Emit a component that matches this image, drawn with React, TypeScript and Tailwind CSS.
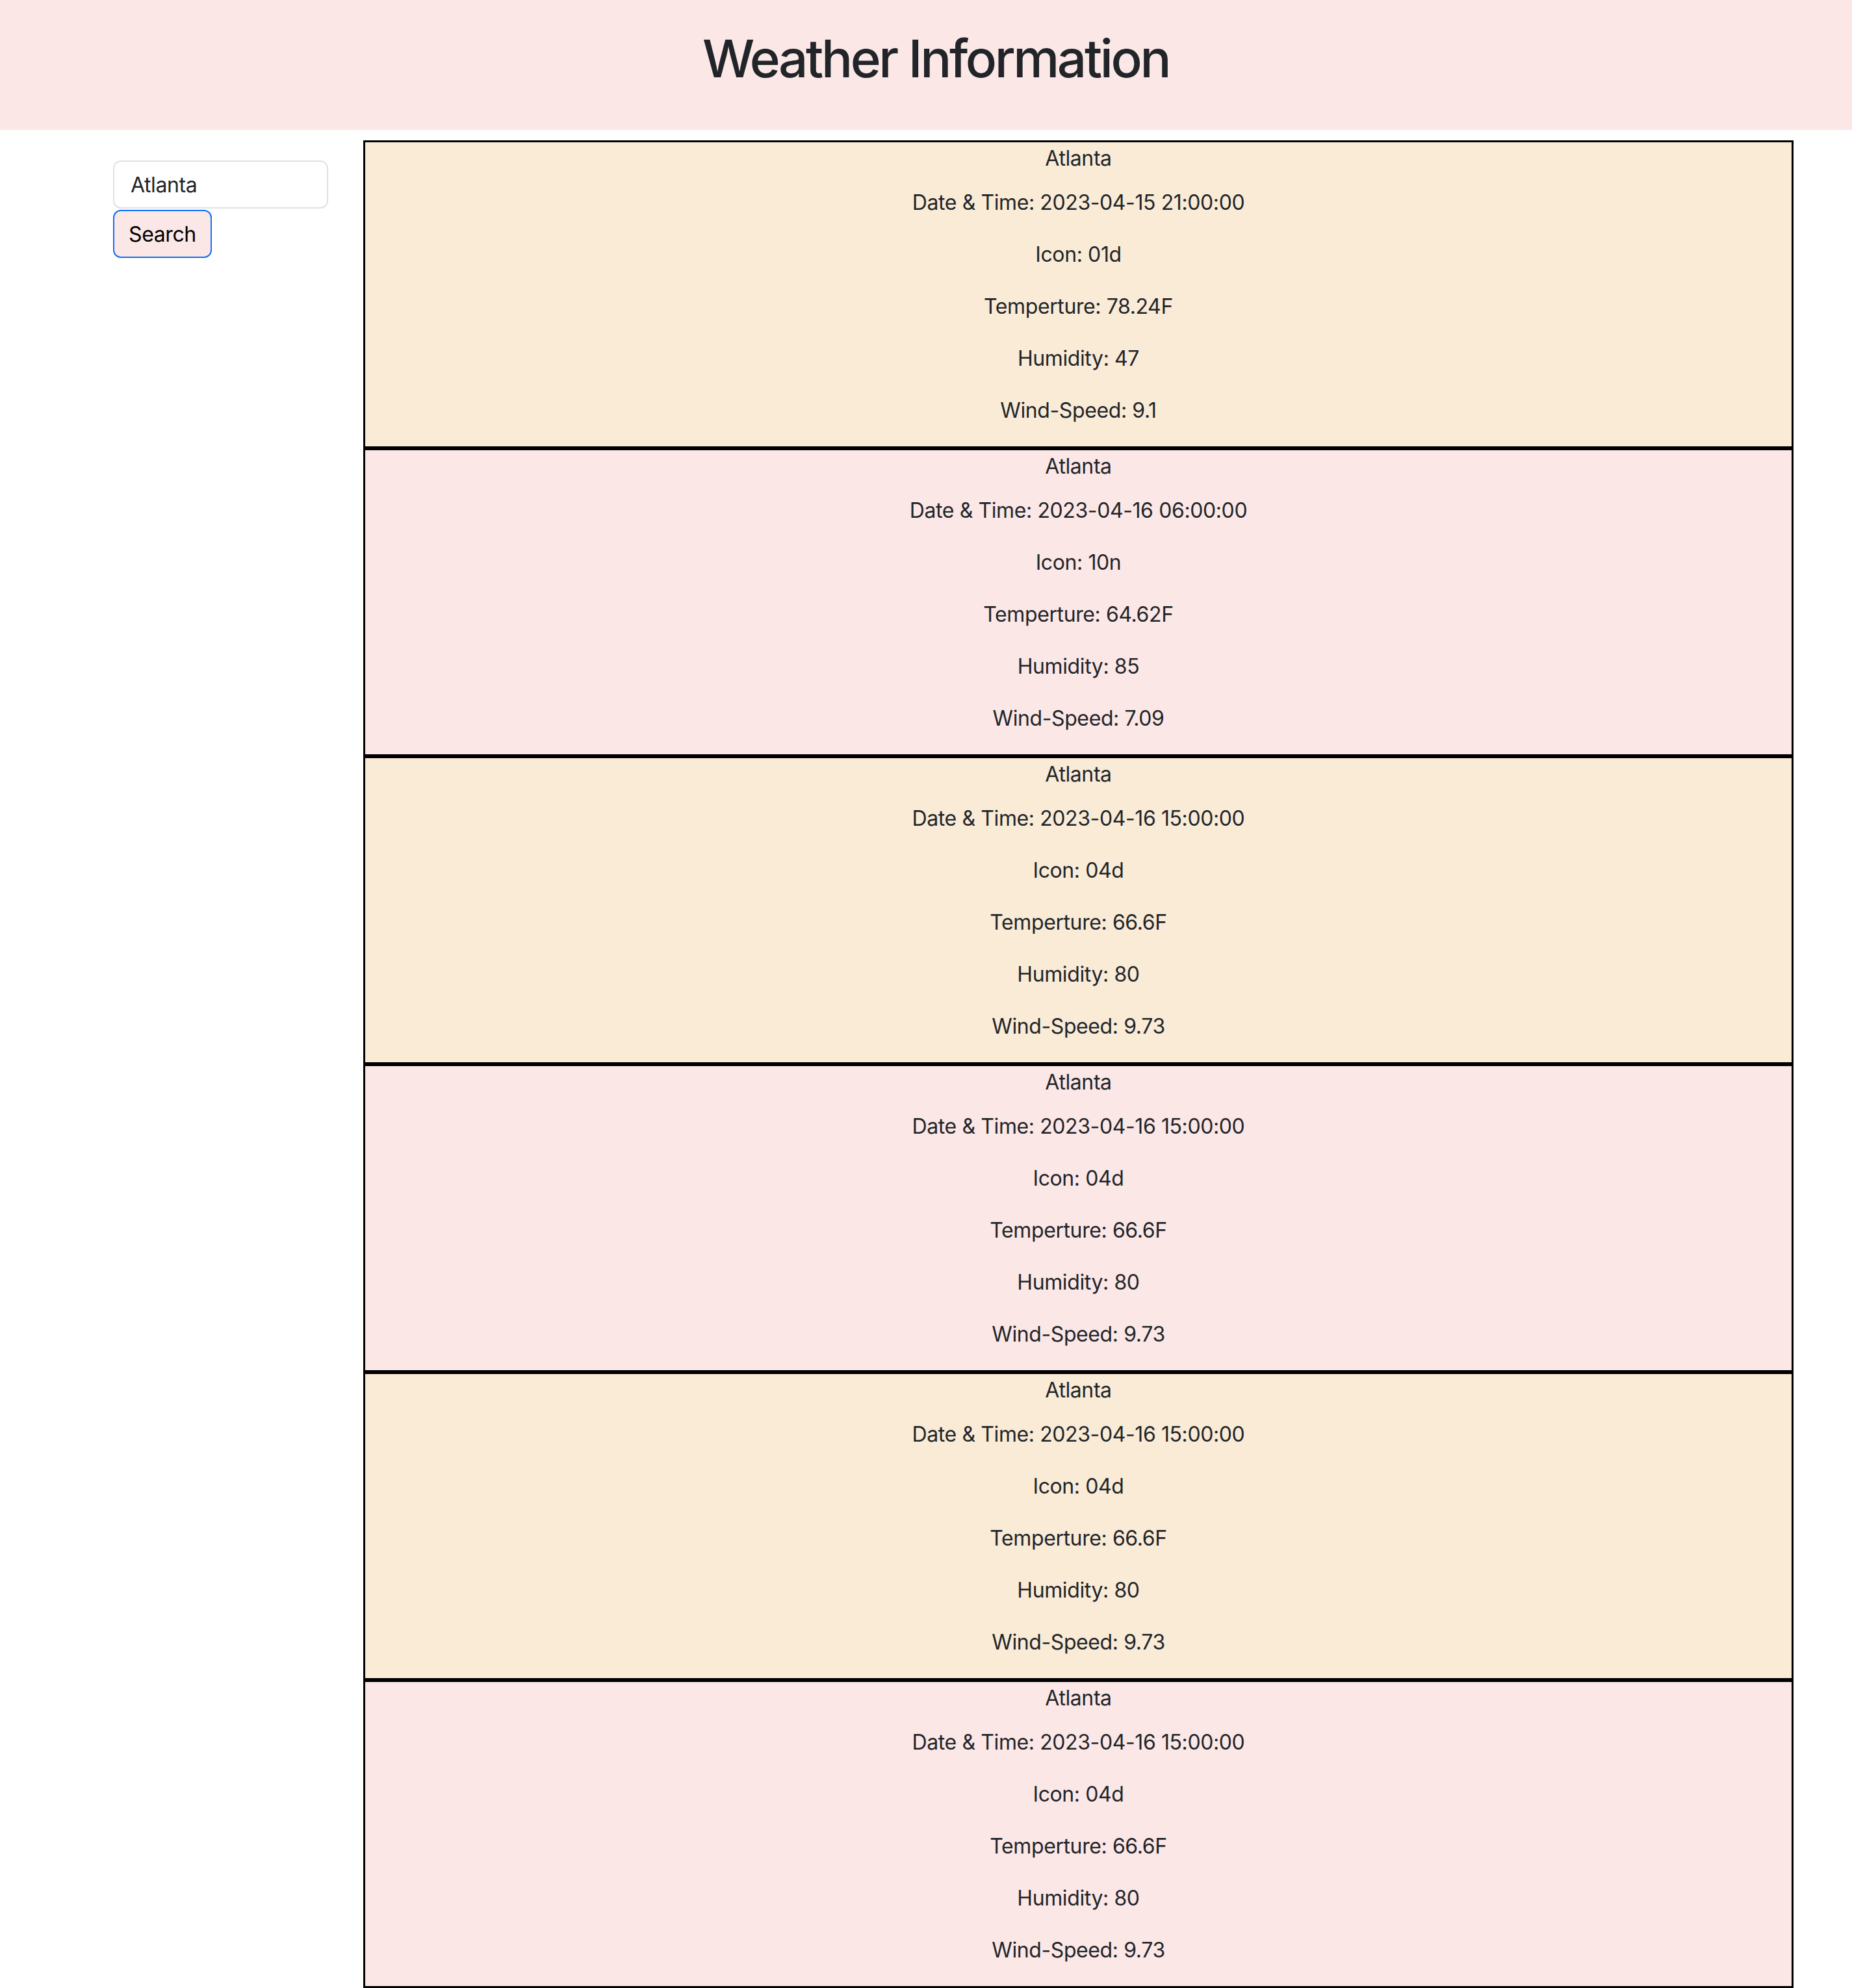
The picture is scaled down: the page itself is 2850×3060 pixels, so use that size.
import React from "react";

type Row = { dt: string; icon: string; temp: string; hum: string; wind: string };

const rows: Row[] = [
  { dt: "2023-04-15 21:00:00", icon: "01d", temp: "78.24F", hum: "47", wind: "9.1" },
  { dt: "2023-04-16 06:00:00", icon: "10n", temp: "64.62F", hum: "85", wind: "7.09" },
  { dt: "2023-04-16 15:00:00", icon: "04d", temp: "66.6F", hum: "80", wind: "9.73" },
  { dt: "2023-04-16 15:00:00", icon: "04d", temp: "66.6F", hum: "80", wind: "9.73" },
  { dt: "2023-04-16 15:00:00", icon: "04d", temp: "66.6F", hum: "80", wind: "9.73" },
  { dt: "2023-04-16 15:00:00", icon: "04d", temp: "66.6F", hum: "80", wind: "9.73" },
];

export default function App() {
  return (
    <div
      className="min-h-screen bg-white text-[#212529]"
      style={{ fontFamily: "Inter, 'Noto Sans', 'Liberation Sans', sans-serif" }}
    >
      <header className="h-[200px] bg-[#fce7e7] pt-[42px] pl-[30px]">
        <h1 className="text-center text-[80px] leading-[96px] font-medium tracking-[-3.4px] text-[#212529]">
          Weather Information
        </h1>
      </header>
      <div className="flex pt-[16px]">
        <div className="w-[559px] shrink-0 pl-[174px] pt-[31px]">
          <div className="w-[331px] h-[74px] border-2 border-[#dee2e6] rounded-[12px] bg-white flex items-center pl-[25px] pt-[2px] text-[32px] tracking-[-0.4px] text-[#212529]">
            Atlanta
          </div>
          <button className="mt-[2px] w-[152px] h-[74px] border-2 border-[#0d6efd] rounded-[12px] bg-[#fce7e7] text-[32px] tracking-[-0.4px] text-black flex items-center justify-center pt-[2px]">
            Search
          </button>
        </div>
        <div className="w-[2201px] shrink-0">
          {rows.map((r, i) => (
            <div
              key={i}
              className={
                "border-[3px] border-black text-center text-[32px] leading-[48px] tracking-[-0.4px] text-[#212529] pt-[1px] " +
                (i % 2 === 0 ? "bg-[#faebd7]" : "bg-[#fce7e7]")
              }
            >
              <div className="mb-[20px]">Atlanta</div>
              <p className="mb-[32px]">Date &amp; Time: {r.dt}</p>
              <p className="mb-[32px]">Icon: {r.icon}</p>
              <p className="mb-[32px]">Temperture: {r.temp}</p>
              <p className="mb-[32px]">Humidity: {r.hum}</p>
              <p className="mb-[31px]">Wind-Speed: {r.wind}</p>
            </div>
          ))}
        </div>
      </div>
    </div>
  );
}
